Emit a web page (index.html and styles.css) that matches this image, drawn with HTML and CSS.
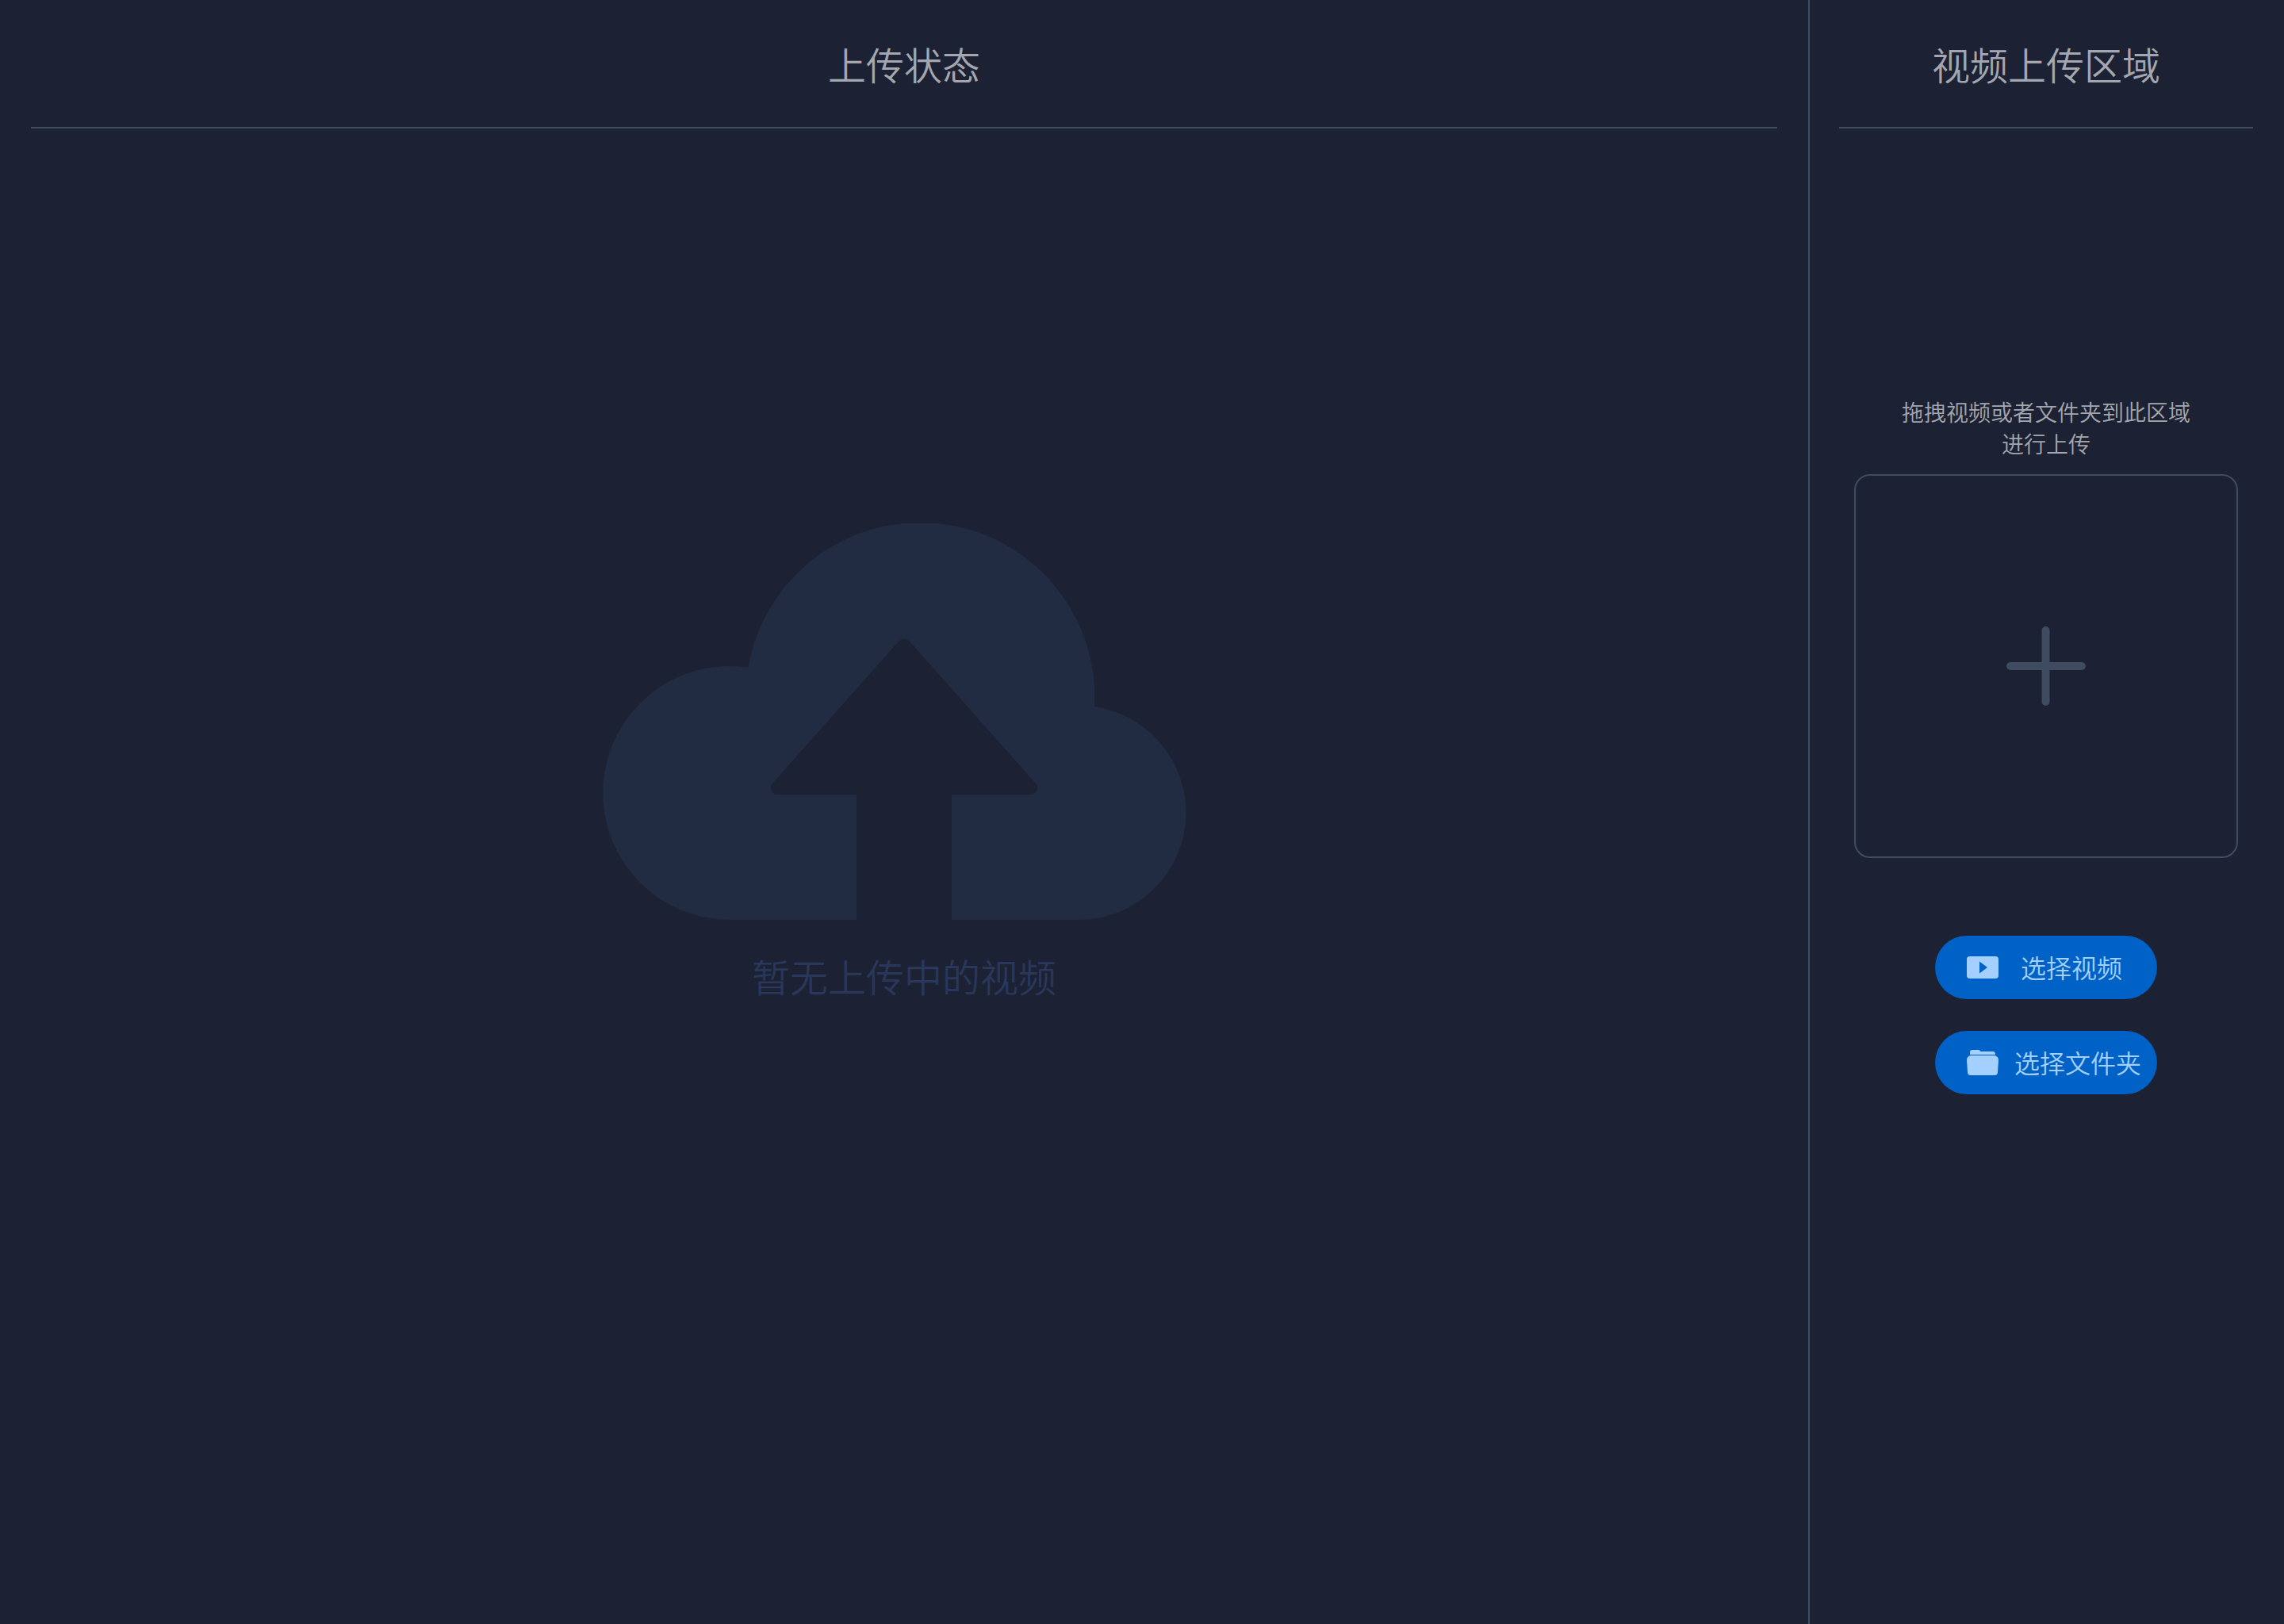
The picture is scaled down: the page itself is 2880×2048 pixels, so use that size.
FILE: index.html
```html
<!DOCTYPE html>
<html lang="zh-CN">
<head>
<meta charset="utf-8">
<meta name="viewport" content="width=device-width, initial-scale=1">
<title>视频上传</title>
<link rel="stylesheet" href="styles.css">
</head>
<body>
<main class="uploader">
  <section class="status">
    <h1 class="panel-title">上传状态</h1>
    <div class="empty">
      <svg class="empty-icon" viewBox="0 0 760 500" aria-hidden="true">
        <path d="M160 500A160 160 0 1 1 183.500 181.700A220 220 0 0 1 620 231A135.500 135.500 0 0 1 735.500 364.500A135.500 135.500 0 0 1 600 500H440V342H540C547 342 551 333 546 328L387 149Q380 142 373 149L214 328C209 333 213 342 220 342H320V500Z"/>
      </svg>
      <p class="empty-text">暂无上传中的视频</p>
    </div>
  </section>
  <aside class="picker">
    <h2 class="panel-title">视频上传区域</h2>
    <div class="picker-body">
      <p class="hint">拖拽视频或者文件夹到此区域进行上传</p>
      <button class="dropzone" type="button" aria-label="添加视频">
        <svg class="plus" viewBox="0 0 100 100" aria-hidden="true"><path d="M5 50H95M49.500 5V95"/></svg>
      </button>
      <div class="actions">
        <button class="action" type="button">
          <svg class="action-icon" viewBox="0 0 40 40" aria-hidden="true"><path fill-rule="evenodd" d="M4 6H36Q40 6 40 10V30Q40 34 36 34H4Q0 34 0 30V10Q0 6 4 6ZM16 12.500V27.500L26 20Z"/></svg>
          <span class="action-label">选择视频</span>
        </button>
        <button class="action" type="button">
          <svg class="action-icon" viewBox="0 0 40 40" aria-hidden="true"><path d="M4 10V7Q4 4 7 4H15Q17 4 17 6H33Q36 6 36 10ZM5 11H35Q40 12 40 17L39 32Q39 36 35 36H5Q1 36 1 32L0 17Q0 12 5 11Z"/></svg>
          <span class="action-label">选择文件夹</span>
        </button>
      </div>
    </div>
  </aside>
</main>
</body>
</html>
```
FILE: styles.css
```css
* {
  box-sizing: border-box;
}

body {
  margin: 0;
  background: #1c2233;
  color: #a4a7af;
  font-family: "Noto Sans CJK SC", sans-serif;
  font-weight: 350;
}

h1, h2, p {
  margin: 0;
  font-weight: 350;
}

button {
  border: 0;
  padding: 0;
  background: none;
  font: inherit;
  cursor: pointer;
}

svg {
  display: block;
}

.uploader {
  display: grid;
  grid-template-columns: 1fr 600px;
  min-height: 100vh;
}

.status {
  padding: 0 39px;
}

.picker {
  padding: 0 39px 0 37px;
  border-left: 2px solid #3f4b60;
}

.panel-title {
  padding: 44px 0;
  border-bottom: 2px solid #3f4b60;
  font-size: 48px;
  line-height: 72px;
  text-align: center;
}

.empty {
  display: flex;
  flex-direction: column;
  align-items: center;
  gap: 34px;
  padding-top: 498px;
}

.empty-icon {
  width: 760px;
  max-width: 100%;
  fill: #212c42;
}

.empty-text {
  color: #29375a;
  font-size: 48px;
  line-height: 72px;
}

.picker-body {
  display: flex;
  flex-direction: column;
  align-items: center;
  padding-top: 337px;
}

.hint {
  max-width: 380px;
  font-size: 28px;
  line-height: 40px;
  text-align: center;
}

.dropzone {
  display: grid;
  place-items: center;
  width: 484px;
  height: 484px;
  margin-top: 19px;
  border: 2px solid #3f4b60;
  border-radius: 20px;
}

.plus {
  width: 100px;
  fill: none;
  stroke: #3f4b60;
  stroke-width: 10;
  stroke-linecap: round;
}

.actions {
  display: grid;
  gap: 40px;
  margin-top: 98px;
}

.action {
  display: flex;
  align-items: center;
  gap: 20px;
  width: 280px;
  height: 80px;
  padding-left: 40px;
  border-radius: 40px;
  background: #0062c6;
  color: #a3d0ff;
  font-size: 32px;
  line-height: 48px;
}

.action-icon {
  width: 40px;
  fill: #a3d0ff;
}

.action-label {
  min-width: 144px;
  padding-bottom: 2px;
  text-align: center;
  white-space: nowrap;
}
```
